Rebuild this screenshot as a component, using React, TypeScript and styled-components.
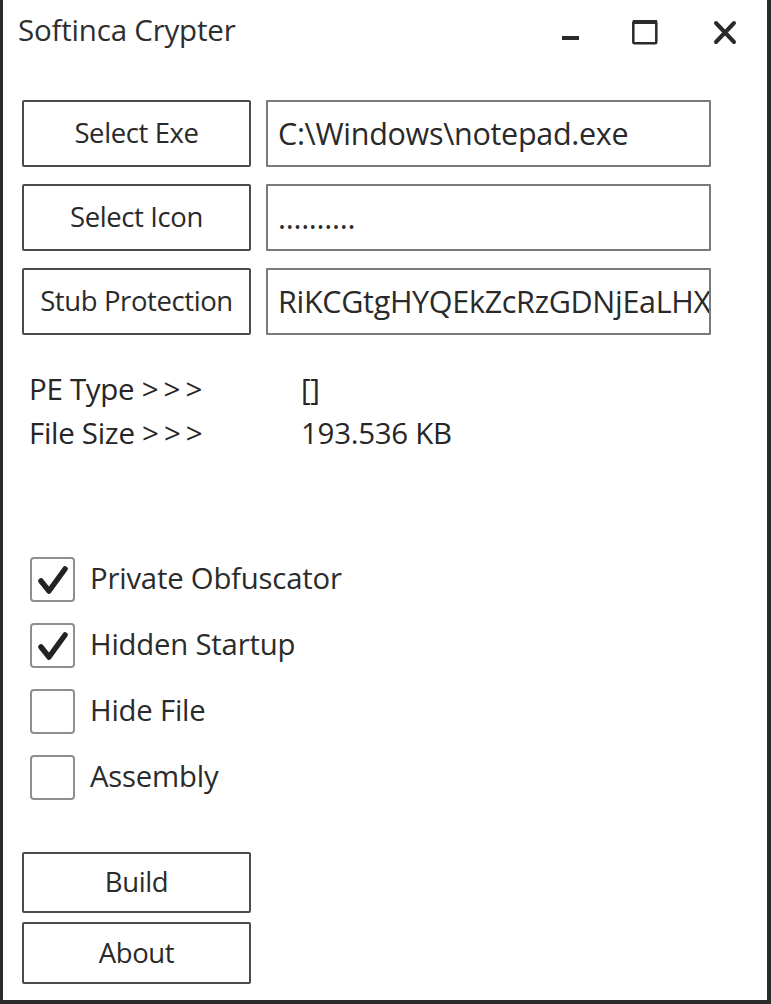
import React from "react";
import styled, { createGlobalStyle } from "styled-components";

const GlobalStyle = createGlobalStyle`
  html, body { margin: 0; padding: 0; background: #ffffff; }
  body { font-family: "Open Sans", "Noto Sans", sans-serif; color: #222; }
  * { box-sizing: border-box; }
`;

const Window = styled.div`
  width: 771px;
  height: 1004px;
  background: #fff;
  border-left: 3px solid #2b2b2b;
  border-right: 4px solid #2b2b2b;
  border-bottom: 4px solid #2b2b2b;
  display: flex;
  flex-direction: column;
`;

const TitleBar = styled.div`
  height: 64px;
  display: flex;
  align-items: flex-start;
  justify-content: space-between;
  padding: 11px 0 0 15px;
`;

const Title = styled.div`
  font-size: 29.5px;
  line-height: 38px;
  color: #2e2e2e;
  letter-spacing: -0.2px;
`;

const Controls = styled.div`
  display: flex;
  align-items: flex-start;
  padding-top: 2px;
`;

const ControlBtn = styled.div<{ $w: number }>`
  width: ${(p) => p.$w}px;
  height: 40px;
  display: flex;
  align-items: flex-start;
  justify-content: center;
  padding-top: 7px;
`;

const Content = styled.div`
  flex: 1;
  display: flex;
  flex-direction: column;
  padding: 36px 0 0 19px;
`;

const InputGrid = styled.div`
  display: grid;
  grid-template-columns: 228px 445px;
  column-gap: 16px;
  row-gap: 17px;
`;

const PushButton = styled.div<{ $h?: number }>`
  height: ${(p) => p.$h ?? 67}px;
  width: 229px;
  border: 2px solid #4b4b4b;
  border-radius: 2px;
  display: flex;
  align-items: center;
  justify-content: center;
  font-size: 27.5px;
  color: #2a2a2a;
  letter-spacing: -0.4px;
  padding-bottom: 2px;
`;

const Field = styled.div`
  height: 67px;
  border: 2px solid #7a7a7a;
  border-radius: 1px;
  display: flex;
  align-items: center;
  padding: 0 0 2px 10px;
  font-size: 30.5px;
  color: #2a2a2a;
  letter-spacing: -0.3px;
  white-space: nowrap;
  overflow: hidden;
`;

const InfoGrid = styled.div`
  display: grid;
  grid-template-columns: 272px auto;
  margin: 34px 0 0 7px;
  row-gap: 4px;
  font-size: 29.5px;
  line-height: 40px;
  color: #262626;
`;

const InfoLabel = styled.div`
  letter-spacing: -0.3px;
  white-space: pre;
`;

const Arrows = styled.span`
  letter-spacing: 5px;
`;

const InfoValue = styled.div`
  letter-spacing: -0.3px;
`;

const CheckList = styled.div`
  display: flex;
  flex-direction: column;
  gap: 21px;
  margin: 104px 0 0 8px;
`;

const CheckRow = styled.div`
  display: flex;
  align-items: center;
  gap: 15px;
  height: 45px;
`;

const Box = styled.div`
  width: 45px;
  height: 45px;
  border: 2.5px solid #8e8e8e;
  border-radius: 4px;
  display: flex;
  align-items: center;
  justify-content: center;
  background: #fff;
`;

const CheckLabel = styled.div`
  font-size: 29.3px;
  color: #2b2b2b;
  letter-spacing: -0.2px;
  padding-bottom: 3px;
`;

const BottomButtons = styled.div`
  display: flex;
  flex-direction: column;
  gap: 9px;
  margin-top: 52px;
`;

const checks = [
  { label: "Private Obfuscator", checked: true },
  { label: "Hidden Startup", checked: true },
  { label: "Hide File", checked: false },
  { label: "Assembly", checked: false },
];

const CheckMark = () => (
  <svg width="34" height="34" viewBox="0 0 34 34">
    <path
      d="M5 18 L13 28 L29 6"
      fill="none"
      stroke="#222"
      strokeWidth="5.5"
      strokeLinecap="round"
      strokeLinejoin="round"
    />
  </svg>
);

export default function App() {
  return (
    <>
      <GlobalStyle />
      <Window>
        <TitleBar>
          <Title>Softinca Crypter</Title>
          <Controls>
            <ControlBtn $w={72}>
              <svg width="18" height="40" viewBox="0 0 18 40">
                <rect x="0" y="16" width="17" height="4" fill="#2a2a2a" />
              </svg>
            </ControlBtn>
            <ControlBtn $w={76}>
              <svg width="26" height="40" viewBox="0 0 26 40">
                <rect x="1.3" y="1.5" width="23" height="21.7" fill="none" stroke="#2a2a2a" strokeWidth="2.5" rx="1" />
                <rect x="1" y="0" width="24" height="4" fill="#2a2a2a" />
              </svg>
            </ControlBtn>
            <ControlBtn $w={84}>
              <svg width="24" height="40" viewBox="0 0 24 40">
                <path d="M3 3 L21 22 M21 3 L3 22" stroke="#2a2a2a" strokeWidth="4" strokeLinecap="round" />
              </svg>
            </ControlBtn>
          </Controls>
        </TitleBar>
        <Content>
          <InputGrid>
            <PushButton>Select Exe</PushButton>
            <Field>C:\Windows\notepad.exe</Field>
            <PushButton>Select Icon</PushButton>
            <Field>..........</Field>
            <PushButton>Stub Protection</PushButton>
            <Field>RiKCGtgHYQEkZcRzGDNjEaLHX</Field>
          </InputGrid>
          <InfoGrid>
            <InfoLabel>{"PE Type "}<Arrows>&gt;&gt;&gt;</Arrows></InfoLabel>
            <InfoValue>[]</InfoValue>
            <InfoLabel>{"File Size "}<Arrows>&gt;&gt;&gt;</Arrows></InfoLabel>
            <InfoValue>193.536 KB</InfoValue>
          </InfoGrid>
          <CheckList>
            {checks.map((c) => (
              <CheckRow key={c.label}>
                <Box>{c.checked && <CheckMark />}</Box>
                <CheckLabel>{c.label}</CheckLabel>
              </CheckRow>
            ))}
          </CheckList>
          <BottomButtons>
            <PushButton $h={61}>Build</PushButton>
            <PushButton $h={62}>About</PushButton>
          </BottomButtons>
        </Content>
      </Window>
    </>
  );
}
